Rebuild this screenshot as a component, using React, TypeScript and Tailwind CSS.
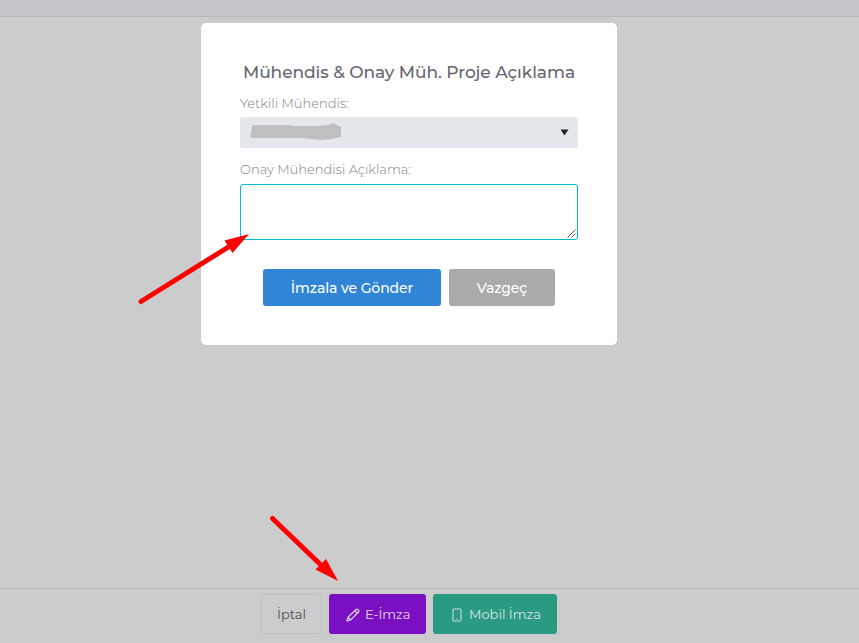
import type { ReactNode } from 'react';

function Label({ className, children }: { className: string; children: ReactNode }) {
  return (
    <label className={`block h-5 self-start whitespace-nowrap text-[13px] leading-5 font-light text-[#7d7f88] ${className}`}>
      {children}
    </label>
  );
}

function Modal() {
  return (
    <section className="absolute top-[23px] left-[201px] flex h-[322px] w-[416px] flex-col rounded-[5px] bg-white px-[39px] pt-[37px]">
      <h2 className="h-6 whitespace-nowrap pl-[3px] text-[17px] leading-6 font-medium tracking-[-0.06px] text-[#66666f]">
        Mühendis &amp; Onay Müh. Proje Açıklama
      </h2>
      <Label className="mt-[9px]">Yetkili Mühendis:</Label>
      <div className="mt-1 flex h-[31px] w-[338px] shrink-0 items-center justify-between rounded-[3px] bg-[#e4e7eb] pr-[9px] pl-[10px]">
        <svg className="-mt-px" width="92" height="18" viewBox="0 -1 92 18" fill="#bfbfbf">
          <path d="M2 2 L5 1 H38 L44 2 H67 L77 1 L82 0 L84 -1 L86 1 L89 2 L91 3 V13 L86 14 L82 15 L72 16 L60 15 L52 14 H3 L0 13 L1 8Z" />
        </svg>
        <svg width="9" height="7" viewBox="0 0 9 7" fill="#212529">
          <path d="M0.5 0.5h8l-4 6z" />
        </svg>
      </div>
      <Label className="mt-[11px]">Onay Mühendisi Açıklama:</Label>
      <div className="mt-[5px] flex h-[56px] w-[338px] shrink-0 items-end justify-end rounded-[3px] border border-[#00bcd4] bg-white p-px">
        <svg width="9" height="9" viewBox="0 0 9 9" stroke="#555" strokeWidth="1">
          <path d="M0.5 8.5 8.5 0.5M4.5 8.5l4-4" />
        </svg>
      </div>
      <div className="mt-[29px] flex gap-2 pl-[23px] text-sm font-medium text-white">
        <button className="h-[37px] w-[178px] rounded-[3px] bg-[#3085d6] tracking-[-0.1px]">İmzala ve Gönder</button>
        <button className="h-[37px] w-[106px] rounded-[3px] bg-[#aaaaaa] tracking-[-0.1px]">Vazgeç</button>
      </div>
    </section>
  );
}

function Arrows() {
  return (
    <svg className="pointer-events-none absolute inset-0" width="859" height="643" viewBox="0 0 859 643" fill="#ff0000" stroke="#ff0000">
      <path d="M141 301.500 230 246" strokeWidth="5" strokeLinecap="round" />
      <path d="M249 234 224.500 240.500 232.500 253z" stroke="none" />
      <path d="M272.500 518.500 322 566" strokeWidth="5" strokeLinecap="round" />
      <path d="M338 581 326 559 315.500 569.500z" stroke="none" />
    </svg>
  );
}

export default function App() {
  return (
    <div className="relative flex h-[643px] w-[859px] flex-col overflow-hidden bg-[#cccccc] font-['Montserrat','Inter',sans-serif]">
      <header className="h-[17px] shrink-0 border-b border-[#b6b7b9] bg-[#c5c7ca]" />
      <main className="flex-1" />
      <footer className="flex h-[55px] shrink-0 gap-[7px] border-t border-[#bbbbbd] pt-[5px] pl-[261px] text-[13px]">
        <button className="h-10 w-[61px] rounded-[3px] border border-[#bfc0c4] pt-0.5 text-[#4c4e52]">İptal</button>
        <button className="flex h-10 w-[97px] items-center rounded-[3px] bg-[#7a10c2] pt-0.5 pl-[17px] text-[#e0dae4]">
          <svg width="14" height="14" viewBox="0 0 14 14" fill="none" stroke="#d7cfdc" strokeWidth="1.3" strokeLinejoin="round">
            <path d="M1 13 2 9.200 10 1.500Q11 .7 12 1.500L12.600 2.200Q13.300 3 12.500 4L4.700 11.900ZM9 2.700l2.300 2.500M2.200 9.400l2.400 2.400" />
          </svg>
          <span className="ml-[5px] whitespace-nowrap">E-İmza</span>
        </button>
        <button className="flex h-10 w-[124px] items-center rounded-[3px] bg-[#2a9b82] pt-0.5 pl-[19px] text-[#dae6e3]">
          <svg width="10" height="14" viewBox="0 0 10 14" fill="none" stroke="#cbdcd8" strokeWidth="1.1">
            <rect x="1" y="1" width="8" height="12" rx="1.2" />
            <path d="M4.400 10.900h1.200" />
          </svg>
          <span className="ml-[7px] whitespace-nowrap">Mobil İmza</span>
        </button>
      </footer>
      <Modal />
      <Arrows />
    </div>
  );
}
